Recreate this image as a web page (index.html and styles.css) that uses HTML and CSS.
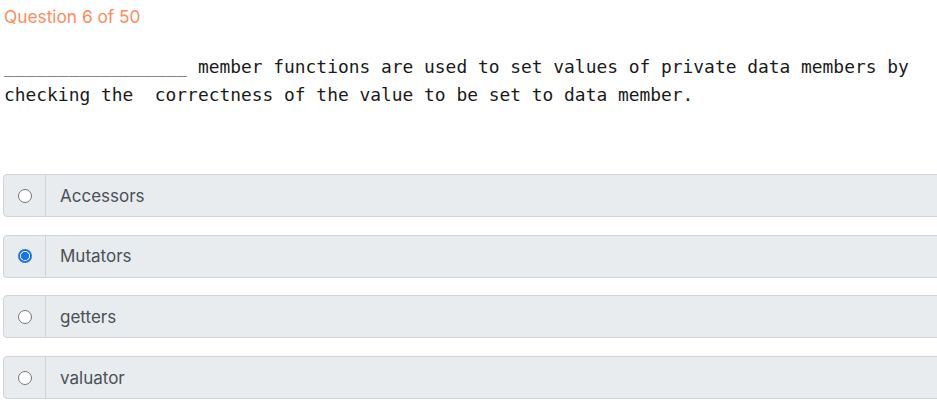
FILE: index.html
```html
<!DOCTYPE html>
<html>
<head>
<meta charset="utf-8">
<link rel="stylesheet" href="styles.css">
</head>
<body>
<div class="page">
  <div class="qnum">Question 6 of 50</div>
  <p class="qtext">_________________ member functions are used to set values of private data members by checking the&nbsp; correctness of the value to be set to data member.</p>
  <div class="options">
    <label class="opt">
      <span class="opt-radio"><span class="radio"></span></span>
      <span class="opt-text">Accessors</span>
    </label>
    <label class="opt">
      <span class="opt-radio"><span class="radio checked"></span></span>
      <span class="opt-text">Mutators</span>
    </label>
    <label class="opt">
      <span class="opt-radio"><span class="radio"></span></span>
      <span class="opt-text">getters</span>
    </label>
    <label class="opt">
      <span class="opt-radio"><span class="radio"></span></span>
      <span class="opt-text">valuator</span>
    </label>
  </div>
</div>
</body>
</html>
```

FILE: styles.css
```css
html, body {
  margin: 0;
  padding: 0;
  background: #ffffff;
  overflow: hidden;
}
.page {
  width: 960px;
  padding: 7px 0 0 3px;
  font-family: "Inter", "Open Sans", sans-serif;
}
.qnum {
  color: #fc8c5c;
  font-size: 17.3px;
  line-height: 20px;
  padding-left: 1px;
}
.qtext {
  margin: 26px 0 0 1px;
  width: 933px;
  font-family: "DejaVu Sans Mono", monospace;
  font-size: 17.9px;
  line-height: 28px;
  color: #1a1a1a;
}
.options {
  margin-top: 65px;
  display: flex;
  flex-direction: column;
  gap: 17.7px;
}
.opt {
  display: flex;
  height: 43px;
  box-sizing: border-box;
  border: 1px solid #ced4da;
  border-radius: 4px;
  background: #e9ecef;
}
.opt-radio {
  width: 41px;
  display: flex;
  align-items: center;
  justify-content: center;
  border-right: 1px solid #ced4da;
}
.radio {
  width: 14px;
  height: 14px;
  box-sizing: border-box;
  border-radius: 50%;
  border: 1px solid #767676;
  background: #ffffff;
}
.radio.checked {
  border: 2px solid #1a73e8;
  background: radial-gradient(circle, #1a73e8 0 3.8px, #ffffff 4.4px);
}
.opt-text {
  display: flex;
  align-items: center;
  padding-left: 14px;
  font-size: 17px;
  color: #495057;
}
```
